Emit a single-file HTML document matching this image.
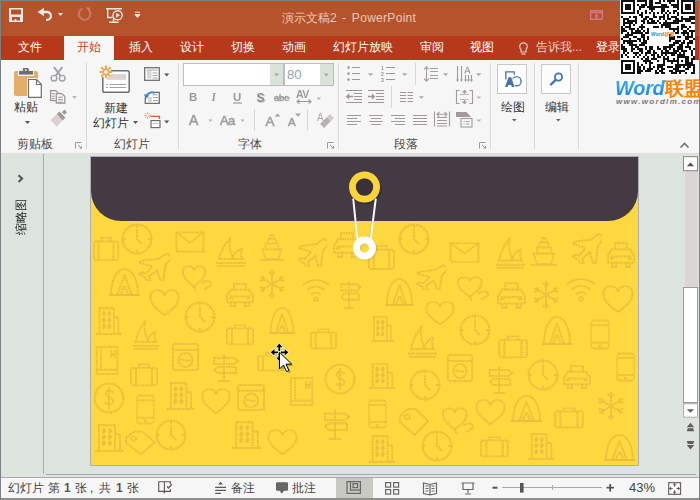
<!DOCTYPE html>
<html><head><meta charset="utf-8">
<style>
*{margin:0;padding:0;box-sizing:border-box}
html,body{width:700px;height:500px;overflow:hidden;background:#f6f6f6;font-family:"Liberation Sans",sans-serif}
.a{position:absolute}
.t{position:absolute;white-space:nowrap;font-size:12px;line-height:16px}
.tab{position:absolute;top:39px;font-size:12px;line-height:16px;color:#fff;white-space:nowrap;font-weight:500}
.glabel{position:absolute;top:136px;font-size:12px;line-height:16px;color:#4a4a4a;white-space:nowrap;font-weight:500}
.sep{position:absolute;width:1px;background:#ddd6d6}
svg{position:absolute;left:0;top:0}
</style></head><body>
<!-- backgrounds -->
<div class="a" style="left:0;top:0;width:700px;height:36px;background:#b5532c"></div>
<div class="a" style="left:0;top:36px;width:700px;height:24px;background:#b7391b"></div>
<div class="a" style="left:64px;top:36px;width:50px;height:24px;background:#f6f6f6"></div>
<div class="a" style="left:0;top:60px;width:700px;height:94px;background:#f6f6f6"></div>
<div class="a" style="left:0;top:153px;width:700px;height:1px;background:#e6dcdc"></div>
<div class="a" style="left:0;top:154px;width:700px;height:323px;background:#dce4dd"></div>
<div class="a" style="left:0;top:477px;width:700px;height:23px;background:#f6f6f6;border-top:1px solid #a9a9b1;border-bottom:2px solid #8d8d8d"></div>
<!-- window borders -->
<div class="a" style="left:0;top:0;width:700px;height:1px;background:#7b8186"></div>
<div class="a" style="left:0;top:0;width:1px;height:500px;background:#7b8186"></div>
<div class="a" style="left:698.7px;top:0;width:1.3px;height:500px;background:#7d8184"></div>

<!-- title & tabs text -->
<div class="t" style="left:282px;top:10px;color:#f1c9b6">演示文稿2<span style="letter-spacing:0.3px;word-spacing:1.8px"> - PowerPoint</span></div>
<div class="tab" style="left:18px">文件</div>
<div class="tab" style="left:77px;color:#c9432a">开始</div>
<div class="tab" style="left:129px">插入</div>
<div class="tab" style="left:180px">设计</div>
<div class="tab" style="left:231px">切换</div>
<div class="tab" style="left:282px">动画</div>
<div class="tab" style="left:333px">幻灯片放映</div>
<div class="tab" style="left:420px">审阅</div>
<div class="tab" style="left:470px">视图</div>
<div class="tab" style="left:536px;color:#f0cfc2">告诉我...</div>
<div class="tab" style="left:596px">登录</div>

<!-- ribbon labels -->
<div class="glabel" style="left:17px">剪贴板</div>
<div class="glabel" style="left:114px">幻灯片</div>
<div class="glabel" style="left:238px">字体</div>
<div class="glabel" style="left:394px">段落</div>
<div class="t" style="left:14px;top:99px;color:#333;font-weight:500">粘贴</div>
<div class="t" style="left:104px;top:99.5px;color:#333;font-weight:500">新建</div>
<div class="t" style="left:93px;top:114.5px;color:#333;font-weight:500">幻灯片</div>
<div class="t" style="left:501px;top:98.5px;color:#333;font-weight:500">绘图</div>
<div class="t" style="left:545px;top:98.5px;color:#333;font-weight:500">编辑</div>
<div class="sep" style="left:86px;top:63px;height:86px"></div>
<div class="sep" style="left:178px;top:63px;height:86px"></div>
<div class="sep" style="left:338px;top:63px;height:86px"></div>
<div class="sep" style="left:490px;top:63px;height:86px"></div>
<div class="sep" style="left:534px;top:63px;height:86px"></div>
<div class="sep" style="left:578px;top:63px;height:86px"></div>
<div class="sep" style="left:254px;top:109px;height:22px"></div>
<div class="sep" style="left:307px;top:109px;height:22px"></div>
<div class="sep" style="left:415px;top:63px;height:22px"></div>
<div class="sep" style="left:391px;top:86px;height:22px"></div>

<!-- font boxes -->
<div class="a" style="left:183px;top:63px;width:101px;height:23px;background:#fff;border:1px solid #bdbdbd"></div>
<div class="a" style="left:270px;top:64px;width:13px;height:21px;background:#dae3da"></div>
<div class="a" style="left:284px;top:63px;width:50px;height:23px;background:#fff;border:1px solid #bdbdbd"></div>
<div class="a" style="left:320px;top:64px;width:13px;height:21px;background:#dae3da"></div>
<div class="t" style="left:287px;top:67px;color:#90a2ae;font-size:13px">80</div>

<!-- draw/edit boxes -->
<div class="a" style="left:497px;top:64px;width:30px;height:30px;background:#fdfdfd;border:1px solid #c8c8c8"></div>
<div class="a" style="left:541px;top:64px;width:30px;height:30px;background:#fdfdfd;border:1px solid #c8c8c8"></div>

<!-- QR -->
<div class="a" style="left:620px;top:0;width:75px;height:75px;background:#fff"></div>
<svg width="700" height="500" style="left:0;top:0">
<g transform="translate(621,0)" fill="#111"><path d="M0 0h14v2h-14zM16 0h10v2h-10zM28 0h4v2h-4zM38 0h2v2h-2zM42 0h2v2h-2zM46 0h8v2h-8zM56 0h2v2h-2zM60 0h14v2h-14zM0 2h2v2h-2zM12 2h2v2h-2zM24 2h2v2h-2zM28 2h4v2h-4zM34 2h6v2h-6zM48 2h2v2h-2zM56 2h2v2h-2zM60 2h2v2h-2zM72 2h2v2h-2zM0 4h2v2h-2zM4 4h6v2h-6zM12 4h2v2h-2zM16 4h2v2h-2zM20 4h6v2h-6zM28 4h4v2h-4zM40 4h6v2h-6zM50 4h8v2h-8zM60 4h2v2h-2zM64 4h6v2h-6zM72 4h2v2h-2zM0 6h2v2h-2zM4 6h6v2h-6zM12 6h2v2h-2zM18 6h6v2h-6zM26 6h22v2h-22zM52 6h6v2h-6zM60 6h2v2h-2zM64 6h6v2h-6zM72 6h2v2h-2zM0 8h2v2h-2zM4 8h6v2h-6zM12 8h2v2h-2zM18 8h2v2h-2zM28 8h6v2h-6zM40 8h4v2h-4zM56 8h2v2h-2zM60 8h2v2h-2zM64 8h6v2h-6zM72 8h2v2h-2zM0 10h2v2h-2zM12 10h2v2h-2zM16 10h2v2h-2zM24 10h2v2h-2zM30 10h2v2h-2zM40 10h4v2h-4zM46 10h2v2h-2zM52 10h4v2h-4zM60 10h2v2h-2zM72 10h2v2h-2zM0 12h14v2h-14zM16 12h2v2h-2zM20 12h2v2h-2zM24 12h2v2h-2zM28 12h2v2h-2zM32 12h2v2h-2zM36 12h2v2h-2zM40 12h2v2h-2zM44 12h2v2h-2zM48 12h2v2h-2zM52 12h2v2h-2zM56 12h2v2h-2zM60 12h14v2h-14zM18 14h4v2h-4zM32 14h2v2h-2zM42 14h2v2h-2zM46 14h2v2h-2zM56 14h2v2h-2zM0 16h2v2h-2zM8 16h2v2h-2zM12 16h4v2h-4zM20 16h2v2h-2zM24 16h4v2h-4zM32 16h4v2h-4zM38 16h6v2h-6zM46 16h2v2h-2zM50 16h6v2h-6zM60 16h2v2h-2zM68 16h6v2h-6zM2 18h6v2h-6zM14 18h2v2h-2zM22 18h4v2h-4zM28 18h4v2h-4zM38 18h2v2h-2zM42 18h2v2h-2zM46 18h4v2h-4zM54 18h4v2h-4zM60 18h14v2h-14zM2 20h2v2h-2zM6 20h10v2h-10zM20 20h4v2h-4zM26 20h2v2h-2zM30 20h4v2h-4zM36 20h2v2h-2zM44 20h2v2h-2zM52 20h10v2h-10zM64 20h6v2h-6zM2 22h10v2h-10zM14 22h2v2h-2zM22 22h2v2h-2zM26 22h10v2h-10zM38 22h2v2h-2zM42 22h16v2h-16zM70 22h4v2h-4zM2 24h2v2h-2zM8 24h2v2h-2zM12 24h2v2h-2zM20 24h2v2h-2zM40 24h10v2h-10zM60 24h4v2h-4zM0 26h2v2h-2zM4 26h6v2h-6zM18 26h6v2h-6zM32 26h6v2h-6zM40 26h2v2h-2zM44 26h6v2h-6zM56 26h2v2h-2zM60 26h6v2h-6zM68 26h2v2h-2zM0 28h4v2h-4zM8 28h6v2h-6zM16 28h2v2h-2zM20 28h2v2h-2zM26 28h2v2h-2zM46 28h12v2h-12zM60 28h2v2h-2zM66 28h2v2h-2zM0 30h6v2h-6zM10 30h2v2h-2zM14 30h6v2h-6zM22 30h2v2h-2zM26 30h2v2h-2zM52 30h2v2h-2zM56 30h2v2h-2zM62 30h4v2h-4zM68 30h6v2h-6zM0 32h2v2h-2zM6 32h2v2h-2zM10 32h12v2h-12zM24 32h4v2h-4zM46 32h2v2h-2zM54 32h4v2h-4zM60 32h8v2h-8zM70 32h2v2h-2zM4 34h8v2h-8zM20 34h4v2h-4zM46 34h4v2h-4zM62 34h2v2h-2zM66 34h2v2h-2zM70 34h2v2h-2zM2 36h6v2h-6zM12 36h4v2h-4zM20 36h4v2h-4zM26 36h2v2h-2zM48 36h6v2h-6zM56 36h4v2h-4zM64 36h8v2h-8zM0 38h2v2h-2zM8 38h2v2h-2zM16 38h4v2h-4zM22 38h2v2h-2zM26 38h2v2h-2zM46 38h8v2h-8zM64 38h4v2h-4zM72 38h2v2h-2zM2 40h14v2h-14zM18 40h2v2h-2zM22 40h4v2h-4zM46 40h4v2h-4zM54 40h6v2h-6zM62 40h2v2h-2zM68 40h4v2h-4zM2 42h2v2h-2zM6 42h6v2h-6zM20 42h6v2h-6zM52 42h6v2h-6zM60 42h4v2h-4zM66 42h6v2h-6zM0 44h2v2h-2zM8 44h8v2h-8zM18 44h6v2h-6zM46 44h8v2h-8zM58 44h4v2h-4zM66 44h2v2h-2zM0 46h4v2h-4zM10 46h2v2h-2zM14 46h4v2h-4zM24 46h2v2h-2zM28 46h4v2h-4zM36 46h2v2h-2zM42 46h10v2h-10zM56 46h6v2h-6zM64 46h6v2h-6zM0 48h6v2h-6zM10 48h4v2h-4zM16 48h6v2h-6zM24 48h2v2h-2zM28 48h4v2h-4zM36 48h4v2h-4zM42 48h4v2h-4zM48 48h2v2h-2zM52 48h2v2h-2zM56 48h6v2h-6zM68 48h2v2h-2zM72 48h2v2h-2zM2 50h4v2h-4zM10 50h2v2h-2zM18 50h4v2h-4zM26 50h4v2h-4zM32 50h2v2h-2zM40 50h2v2h-2zM44 50h4v2h-4zM52 50h6v2h-6zM60 50h6v2h-6zM70 50h2v2h-2zM2 52h2v2h-2zM6 52h2v2h-2zM12 52h6v2h-6zM20 52h2v2h-2zM24 52h6v2h-6zM32 52h4v2h-4zM40 52h16v2h-16zM58 52h2v2h-2zM62 52h2v2h-2zM70 52h2v2h-2zM0 54h2v2h-2zM4 54h2v2h-2zM14 54h2v2h-2zM18 54h2v2h-2zM24 54h2v2h-2zM30 54h4v2h-4zM36 54h2v2h-2zM40 54h2v2h-2zM44 54h2v2h-2zM50 54h4v2h-4zM56 54h8v2h-8zM70 54h2v2h-2zM0 56h2v2h-2zM6 56h2v2h-2zM12 56h2v2h-2zM16 56h2v2h-2zM22 56h2v2h-2zM26 56h2v2h-2zM32 56h2v2h-2zM36 56h4v2h-4zM42 56h2v2h-2zM46 56h2v2h-2zM56 56h12v2h-12zM72 56h2v2h-2zM20 58h2v2h-2zM24 58h4v2h-4zM30 58h6v2h-6zM42 58h6v2h-6zM52 58h2v2h-2zM56 58h2v2h-2zM64 58h4v2h-4zM70 58h4v2h-4zM0 60h14v2h-14zM22 60h8v2h-8zM36 60h2v2h-2zM42 60h2v2h-2zM46 60h12v2h-12zM60 60h2v2h-2zM64 60h4v2h-4zM70 60h2v2h-2zM0 62h2v2h-2zM12 62h2v2h-2zM16 62h2v2h-2zM24 62h2v2h-2zM28 62h4v2h-4zM42 62h2v2h-2zM50 62h2v2h-2zM56 62h2v2h-2zM64 62h8v2h-8zM0 64h2v2h-2zM4 64h6v2h-6zM12 64h2v2h-2zM16 64h2v2h-2zM20 64h2v2h-2zM28 64h2v2h-2zM36 64h8v2h-8zM54 64h20v2h-20zM0 66h2v2h-2zM4 66h6v2h-6zM12 66h2v2h-2zM16 66h4v2h-4zM22 66h2v2h-2zM28 66h2v2h-2zM32 66h2v2h-2zM36 66h6v2h-6zM46 66h6v2h-6zM54 66h6v2h-6zM62 66h2v2h-2zM66 66h4v2h-4zM72 66h2v2h-2zM0 68h2v2h-2zM4 68h6v2h-6zM12 68h2v2h-2zM16 68h4v2h-4zM22 68h2v2h-2zM26 68h6v2h-6zM36 68h2v2h-2zM40 68h4v2h-4zM52 68h6v2h-6zM64 68h4v2h-4zM72 68h2v2h-2zM0 70h2v2h-2zM12 70h2v2h-2zM16 70h6v2h-6zM24 70h6v2h-6zM34 70h2v2h-2zM38 70h4v2h-4zM48 70h4v2h-4zM54 70h10v2h-10zM72 70h2v2h-2zM0 72h14v2h-14zM16 72h4v2h-4zM34 72h4v2h-4zM40 72h4v2h-4zM50 72h6v2h-6zM58 72h2v2h-2zM64 72h2v2h-2zM70 72h4v2h-4z"/></g>
</svg>
<div class="a" style="left:649px;top:28px;width:20px;height:18px;background:#fff"></div>
<div class="t" style="left:651px;top:31px;font-size:5px;line-height:6px;color:#2a8ad8;font-weight:bold;font-style:italic">Word<span style="color:#f08a1c">联盟</span></div>
<div class="a" style="left:600px;top:75px;width:98px;height:30px;background:#f6f6f6"></div>
<div class="t" style="left:615px;top:77px;font-size:20px;line-height:22px;font-weight:bold;font-style:italic;letter-spacing:-0.3px"><span style="background:linear-gradient(#46b6f4,#1a80d8);-webkit-background-clip:text;background-clip:text;color:transparent">Word</span><span style="color:#f4860e;font-style:normal;font-size:19px;letter-spacing:0;position:relative;top:-0.5px;font-weight:bold">联盟</span></div>
<div class="t" style="left:616px;top:97px;font-size:8px;line-height:10px;font-style:italic;font-weight:bold;color:#7a7a7a;letter-spacing:1.3px">www.wordlm.com</div>

<!-- main area -->
<div class="a" style="left:43px;top:154px;width:1px;height:320px;background:#a9a9b5"></div>
<div class="a" style="left:46px;top:474px;width:650px;height:1px;background:#a9a9b5"></div>
<div class="a" style="left:90px;top:156px;width:549px;height:310px;background:#fdd83f;border:1px solid #adadbb;overflow:hidden">
</div>

<svg width="700" height="500" style="left:0;top:0"><defs>
<filter id="fz" x="-5%" y="-5%" width="110%" height="110%"><feGaussianBlur stdDeviation="0.35"/></filter>
<clipPath id="slideclip"><rect x="91" y="157" width="547" height="308"/></clipPath>
<symbol id="i-suitcase" viewBox="0 0 30 30" preserveAspectRatio="none"><rect x="2" y="8" width="26" height="20" rx="2"/><path d="M10 8V4h10v4M7 8v20M23 8v20"/></symbol>
<symbol id="i-clock" viewBox="0 0 30 30" preserveAspectRatio="none"><circle cx="15" cy="15" r="13.5"/><path d="M15 6v9l5 5M15 1.5v3M15 25.5v3M1.5 15h3M25.5 15h3"/></symbol>
<symbol id="i-envelope" viewBox="0 0 30 30" preserveAspectRatio="none"><rect x="1.5" y="3" width="27" height="24"/><path d="M1.5 3L15 16 28.5 3"/></symbol>
<symbol id="i-plane" viewBox="0 0 30 30" preserveAspectRatio="none"><path d="M28 2c-2 0-5 2-8 5L4 9 2 11l12 4-6 7-4-1-2 2 5 3 3 5 2-2-1-4 7-6 4 12 2-2 2-16c3-3 5-6 5-8z"/></symbol>
<symbol id="i-balloon" viewBox="0 0 30 30" preserveAspectRatio="none"><path d="M12 24C4 17 1 13 1 8a5.5 5.5 0 0 1 11-2 5.5 5.5 0 0 1 11 2c0 5-3 9-11 16zM12 24l2 5M20 20c3-2 5-3 6-2a3 3 0 0 1 3 3c0 2-3 4-7 6"/></symbol>
<symbol id="i-tent" viewBox="0 0 30 30" preserveAspectRatio="none"><path d="M2 28C2 12 8 2 15 2s13 10 13 26zM0 28h30M15 8l-7 20M15 8l7 20M11 28l4-9 4 9"/></symbol>
<symbol id="i-heart" viewBox="0 0 30 30" preserveAspectRatio="none"><path d="M15 28C5 20 1.5 15 1.5 9a6.8 6.8 0 0 1 13.5-2 6.8 6.8 0 0 1 13.5 2c0 6-3.5 11-13.5 19z"/></symbol>
<symbol id="i-hotel" viewBox="0 0 30 30" preserveAspectRatio="none"><path d="M5 28V3h16v25M21 12h5v16M1 28h28M9 7h2v3H9zM15 7h2v3h-2zM9 13h2v3H9zM15 13h2v3h-2zM9 19h2v3H9zM15 19h2v3h-2z"/></symbol>
<symbol id="i-opera" viewBox="0 0 30 30" preserveAspectRatio="none"><path d="M1 26h28M3 22h24M4 22C6 12 10 6 14 2c-1 8 0 14 4 20M16 22c2-6 5-9 9-10-1 4-1 7 1 10M2 29h26"/></symbol>
<symbol id="i-ship" viewBox="0 0 30 30" preserveAspectRatio="none"><path d="M3 18h24l-4 10H7zM7 18v-6h16v6M10 12V7h10v5M13 7V3h4v4M0 29h30"/></symbol>
<symbol id="i-car" viewBox="0 0 30 30" preserveAspectRatio="none"><path d="M2 22v-7l4-6h18l4 6v7zM6 22v4h4v-4M20 22v4h4v-4M5 16h20M9 9V3h12v6M4 18h4M22 18h4"/></symbol>
<symbol id="i-snow" viewBox="0 0 30 30" preserveAspectRatio="none"><path d="M15 1v28M3 8l24 14M3 22L27 8M12 3l3 3 3-3M12 27l3-3 3 3M3 12l4-1-1-4M27 18l-4 1 1 4M3 18l4 1-1 4M27 12l-4-1 1-4"/></symbol>
<symbol id="i-wifi" viewBox="0 0 30 30" preserveAspectRatio="none"><path d="M1 10a20 20 0 0 1 28 0M6 15a13 13 0 0 1 18 0M10 20a7 7 0 0 1 10 0"/><circle cx="15" cy="25" r="2"/></symbol>
<symbol id="i-sign" viewBox="0 0 30 30" preserveAspectRatio="none"><path d="M14 2v26M8 28h12M4 5h20l4 3-4 3H4zM26 14H8l-4 3 4 3h18z"/></symbol>
<symbol id="i-book" viewBox="0 0 30 30" preserveAspectRatio="none"><path d="M3 2h24v26H3zM3 24h24M8 2v22M20 5v6l2-2 2 2V5"/></symbol>
<symbol id="i-washing" viewBox="0 0 30 30" preserveAspectRatio="none"><rect x="2" y="2" width="26" height="26" rx="2"/><path d="M2 8h26"/><circle cx="15" cy="18" r="7"/><path d="M10 18c2-2 4 2 10 0"/></symbol>
<symbol id="i-dollar" viewBox="0 0 30 30" preserveAspectRatio="none"><circle cx="15" cy="15" r="13.5"/><path d="M19 10c-1-2-7-3-7 1s7 3 7 7-6 3-8 1M15 5v20"/></symbol>
<symbol id="i-phone" viewBox="0 0 30 30" preserveAspectRatio="none"><rect x="3" y="1.5" width="24" height="27" rx="3"/><path d="M3 6h24M3 23h24M13 26h4"/></symbol>
<symbol id="i-tag" viewBox="0 0 30 30" preserveAspectRatio="none"><path d="M2 9L9 2h8l12 12-13 14L2 15z"/><circle cx="9" cy="10" r="2.5"/></symbol>
</defs><g clip-path="url(#slideclip)" filter="url(#fz)" fill="none" stroke="#e8bd3a" stroke-width="2" stroke-dasharray="2 0.6" opacity="0.9"><use href="#i-suitcase" x="92" y="234" width="28" height="28"/><use href="#i-clock" x="121" y="223" width="32" height="32"/><use href="#i-envelope" x="175" y="230" width="30" height="24"/><use href="#i-plane" x="137" y="252" width="33" height="29"/><use href="#i-balloon" x="182" y="265" width="30" height="27"/><use href="#i-tent" x="109" y="267" width="31" height="30"/><use href="#i-heart" x="149" y="289" width="31" height="28"/><use href="#i-clock" x="184" y="301" width="32" height="32"/><use href="#i-hotel" x="95" y="305" width="27" height="31"/><use href="#i-opera" x="132" y="320" width="28" height="30"/><use href="#i-opera" x="215" y="237" width="32" height="30"/><use href="#i-ship" x="260" y="232" width="24" height="29"/><use href="#i-plane" x="297" y="237" width="30" height="30"/><use href="#i-car" x="332" y="230" width="30" height="31"/><use href="#i-snow" x="257" y="269" width="30" height="30"/><use href="#i-wifi" x="302" y="276" width="28" height="28"/><use href="#i-car" x="225" y="281" width="30" height="29"/><use href="#i-sign" x="338" y="279" width="24" height="31"/><use href="#i-tent" x="269" y="306" width="26" height="29"/><use href="#i-suitcase" x="225" y="322" width="30" height="24"/><use href="#i-suitcase" x="309" y="326" width="29" height="24"/><use href="#i-suitcase" x="367" y="242" width="29" height="29"/><use href="#i-clock" x="398" y="223" width="32" height="32"/><use href="#i-envelope" x="449" y="241" width="31" height="23"/><use href="#i-plane" x="415" y="264" width="31" height="26"/><use href="#i-tent" x="385" y="277" width="29" height="30"/><use href="#i-balloon" x="457" y="276" width="32" height="26"/><use href="#i-heart" x="425" y="301" width="30" height="25"/><use href="#i-clock" x="459" y="314" width="32" height="32"/><use href="#i-hotel" x="370" y="314" width="24" height="29"/><use href="#i-opera" x="495" y="237" width="31" height="32"/><use href="#i-ship" x="531" y="235" width="26" height="31"/><use href="#i-plane" x="571" y="232" width="31" height="32"/><use href="#i-car" x="606" y="240" width="30" height="31"/><use href="#i-car" x="496" y="280" width="31" height="32"/><use href="#i-snow" x="531" y="280" width="30" height="30"/><use href="#i-wifi" x="566" y="275" width="30" height="29"/><use href="#i-heart" x="602" y="285" width="32" height="29"/><use href="#i-tent" x="542" y="315" width="30" height="31"/><use href="#i-phone" x="589" y="319" width="22" height="31"/><use href="#i-book" x="94" y="345" width="26" height="31"/><use href="#i-suitcase" x="129" y="361" width="30" height="26"/><use href="#i-washing" x="171" y="342" width="29" height="30"/><use href="#i-sign" x="210" y="353" width="30" height="30"/><use href="#i-dollar" x="93" y="382" width="32" height="32"/><use href="#i-phone" x="135" y="394" width="21" height="31"/><use href="#i-hotel" x="166" y="380" width="29" height="31"/><use href="#i-heart" x="201" y="388" width="30" height="27"/><use href="#i-hotel" x="94" y="422" width="30" height="31"/><use href="#i-tag" x="124" y="430" width="32" height="26"/><use href="#i-clock" x="155" y="419" width="32" height="32"/><use href="#i-suitcase" x="256" y="350" width="30" height="22"/><use href="#i-dollar" x="324" y="363" width="32" height="32"/><use href="#i-washing" x="236" y="383" width="30" height="29"/><use href="#i-book" x="288" y="376" width="27" height="31"/><use href="#i-sign" x="321" y="408" width="30" height="33"/><use href="#i-hotel" x="231" y="419" width="31" height="31"/><use href="#i-heart" x="267" y="429" width="31" height="27"/><use href="#i-opera" x="407" y="325" width="31" height="33"/><use href="#i-hotel" x="368" y="361" width="28" height="29"/><use href="#i-washing" x="446" y="353" width="28" height="30"/><use href="#i-clock" x="409" y="369" width="32" height="32"/><use href="#i-sign" x="486" y="365" width="28" height="30"/><use href="#i-phone" x="367" y="399" width="21" height="30"/><use href="#i-tag" x="398" y="407" width="31" height="30"/><use href="#i-balloon" x="442" y="407" width="32" height="28"/><use href="#i-heart" x="475" y="399" width="31" height="27"/><use href="#i-hotel" x="368" y="433" width="28" height="31"/><use href="#i-clock" x="421" y="430" width="32" height="32"/><use href="#i-suitcase" x="479" y="434" width="31" height="24"/><use href="#i-suitcase" x="497" y="333" width="32" height="26"/><use href="#i-phone" x="615" y="352" width="21" height="30"/><use href="#i-clock" x="527" y="359" width="32" height="32"/><use href="#i-car" x="562" y="363" width="30" height="29"/><use href="#i-tent" x="511" y="394" width="31" height="29"/><use href="#i-suitcase" x="553" y="405" width="32" height="24"/><use href="#i-snow" x="596" y="391" width="30" height="30"/><use href="#i-hotel" x="527" y="431" width="28" height="30"/><use href="#i-tent" x="604" y="433" width="31" height="29"/></g>
<path d="M91 157v34a30 30 0 0 0 30 30h487a30 30 0 0 0 30-30v-34z" fill="#443a43"/>
<!-- clasp -->
<circle cx="366.5" cy="189" r="15.5" fill="#2f282e" opacity="0.5"/>
<path d="M353.5 199l4 42M376 199l-6 42" stroke="#3a3238" stroke-width="1.8" opacity="0.4"/>
<path d="M353.2 198.5l4.3 42M375.8 198.5l-5.3 42" stroke="#fbfbfb" stroke-width="2"/>
<circle cx="364.5" cy="187" r="12.1" fill="none" stroke="#fdd43c" stroke-width="6.8"/>
<circle cx="365.7" cy="249.3" r="8" fill="none" stroke="#c9a93a" stroke-width="7.5" opacity="0.35"/>
<circle cx="364.5" cy="248" r="8" fill="none" stroke="#ffffff" stroke-width="7"/>
<!-- cursor -->
<g fill="#000" stroke="#fff" stroke-width="1.3" stroke-linejoin="round" paint-order="stroke">
<path d="M279.3 343.6l3.2 3.6h-2.3v3.8h-1.8v-3.8h-2.3z"/>
<path d="M270.8 352.3l3.6-3.2v2.3h3.8v1.8h-3.8v2.3z"/>
<path d="M288.3 352.3l-3.6-3.2v2.3h-3.8v1.8h3.8v2.3z"/>
<path d="M279.3 361l-3.2-3.6h2.3v-3.8h1.8v3.8h2.3z"/>
</g>
<path d="M280 353.5l0 16 4-4 3 6.5 2.6-1.2-3-6.3h5.6z" fill="#000" opacity="0.22" transform="translate(1.5,1.5)"/>
<path d="M279.5 352.3v16.7l4-4 3 6.6 2.4-1.1-3-6.4h5.8z" fill="#fff" stroke="#000" stroke-width="1" stroke-linejoin="miter"/>
</svg>
<!-- status -->
<div class="t" style="left:8px;top:480px;color:#444;font-weight:500">幻灯片</div>
<div class="t" style="left:47.5px;top:480px;color:#444;font-weight:500">第</div>
<div class="t" style="left:64px;top:480px;color:#555;font-weight:bold">1</div>
<div class="t" style="left:74.5px;top:480px;color:#444;font-weight:500">张</div>
<div class="t" style="left:90px;top:480px;color:#444;font-weight:500">,</div>
<div class="t" style="left:98.5px;top:480px;color:#444;font-weight:500">共</div>
<div class="t" style="left:116px;top:480px;color:#555;font-weight:bold">1</div>
<div class="t" style="left:126.5px;top:480px;color:#444;font-weight:500">张</div>
<div class="t" style="left:231px;top:480px;color:#444;font-weight:500">备注</div>
<div class="t" style="left:292px;top:480px;color:#444;font-weight:500">批注</div>
<div class="a" style="left:336px;top:478px;width:37px;height:20px;background:#c9c9c3"></div>
<div class="t" style="left:629px;top:480px;color:#444;font-size:13px">43%</div>

<svg width="700" height="500">
<!-- title bar icons -->
<path fill-rule="evenodd" fill="#f2e8e2" d="M9 8h14v14H9z M11 9.6h10v4.9H11z M12 17.1h8v3.4h-3.6v-1.6h-1.8v1.6H12z"/>
<path d="M37.5 12l6.5-4.2v8.4z" fill="#f2e8e2"/>
<path d="M43 12h4a3.9 3.9 0 0 1 0 7.8h-1" fill="none" stroke="#f2e8e2" stroke-width="2.3"/>
<path d="M58 13h5l-2.5 3z" fill="#f2e8e2"/>
<path d="M89 10.2a5.8 5.8 0 1 1 -6.5 -1.6" fill="none" stroke="#cc7865" stroke-width="2"/>
<path d="M85.5 7.2l5 0.3-1.2 4.6z" fill="#cc7865"/>
<g fill="none" stroke="#f2e8e2" stroke-width="1.4">
  <path d="M106 8.7h16M107.7 9v8.5h5"/>
  <circle cx="117.6" cy="15.3" r="4.6"/>
  <path d="M109 22.2h9.5M113.5 18v4"/>
</g>
<path d="M116.2 12.8v5l3.8-2.5z" fill="#f2e8e2"/>
<path d="M135 12.2h5M135 14.5h5l-2.5 3z" fill="#f2e8e2" stroke="#f2e8e2" stroke-width="1"/>
<g fill="none" stroke="#d8778a" stroke-width="1.4">
  <rect x="590.7" y="10.7" width="11.6" height="8.6"/>
  <path d="M591 12.5h11M596.5 19v-5"/>
</g>
<path d="M594 16.5l2.5-2.5 2.5 2.5z" fill="#d8778a"/>
<!-- lightbulb -->
<g fill="none" stroke="#f0cfc2" stroke-width="1.2">
  <path d="M521 49.5a3.8 3.8 0 1 1 5 0v2.5h-5z"/>
  <path d="M521.5 54h4"/>
</g>

<!-- clipboard -->
<rect x="14" y="71" width="24" height="25" rx="2" fill="#e3ad6a"/>
<rect x="18" y="70" width="16" height="6" fill="#f6f6f6"/>
<rect x="19" y="71" width="14" height="3.6" fill="#6f6f6f"/>
<rect x="22.8" y="68" width="6" height="4" rx="1" fill="#6f6f6f"/>
<rect x="25" y="69.3" width="1.6" height="1.5" fill="#f6f6f6"/>
<path d="M27 78h10l5.5 5.5V98H27z" fill="#f6f6f6"/>
<path d="M28.5 79.5h8l4.8 4.8v13h-12.8z" fill="#fff" stroke="#6f6f6f" stroke-width="1.2"/>
<path d="M36.5 79.5v5h4.8" fill="none" stroke="#6f6f6f" stroke-width="1.2"/>
<path d="M25 121h5l-2.5 3z" fill="#555"/>
<!-- scissors -->
<g fill="none" stroke="#a3a0aa" stroke-width="1.4">
  <circle cx="54" cy="78.2" r="2.8"/><circle cx="62.2" cy="78.2" r="2.8"/>
  <path d="M54 67.2L60.6 75.8M62.2 67.2L55.6 75.8" stroke-width="1.9"/>
</g>
<!-- copy -->
<g fill="#f6f6f6" stroke="#9b9292" stroke-width="1.2">
  <path d="M50.6 90.6h5.2l2.3 2.3v7.7h-7.5z"/>
  <path d="M56.3 93.6h5.5l3 3v6.6h-8.5z"/>
</g>
<path d="M51.8 93.7h3M51.8 96.2h3M51.8 98.7h3M58 97.2h5M58 99.7h5M58 102.2h5" stroke="#9b9292" stroke-width="1"/>
<path d="M72 96h5l-2.5 3z" fill="#b8b8b8"/>
<!-- format painter -->
<path d="M50.5 120.2l5.8-5.6 6 6-5.6 5.8z" fill="#d9d0d0"/>
<path d="M56.6 114.3l2.8-2.7 6 6-2.7 2.8z" fill="#a29a9a"/>
<path d="M61.8 112.2l2.6-2.6 2.6 2.6-2.6 2.6z" fill="#a29a9a"/>

<!-- new slide -->
<rect x="102.8" y="70.8" width="26.4" height="21.4" rx="1.8" fill="#fff" stroke="#707070" stroke-width="1.5"/>
<rect x="107" y="74" width="19" height="5.8" fill="#dcd3d3"/>
<path d="M106 84.5h2M109.5 84.5h16.5M106 87.5h2M109.5 87.5h16.5" stroke="#a3a3b3" stroke-width="1.2"/>
<rect x="98" y="64" width="13" height="13" fill="#f6f6f6"/>
<g stroke="#e9a852" stroke-width="2" fill="none">
  <path d="M105.9 65.6v3.3M105.9 75v3.3M99.5 71.9h3.3M109 71.9h3.3M101.3 67.3l2.2 2.2M108.3 74.3l2.2 2.2M110.5 67.3l-2.2 2.2M103.5 74.3l-2.2 2.2"/>
  <circle cx="105.9" cy="71.9" r="2.6" stroke-width="1.5"/>
</g>
<path d="M133 121h5l-2.5 3z" fill="#555"/>
<!-- layout -->
<rect x="144.7" y="67.7" width="14.6" height="12.6" fill="#fff" stroke="#707070" stroke-width="1.3"/>
<rect x="147" y="70.5" width="4.5" height="8" fill="#dcd3d3"/>
<path d="M146.5 70h11M152.5 73h5M152.5 75.5h5M152.5 78h5" stroke="#a3a3b3" stroke-width="1"/>
<path d="M164.2 73.5h5l-2.5 3z" fill="#555"/>
<!-- reset -->
<path d="M150 92.3h9.3v11h-14v-6" fill="#fff" stroke="#6e6e6e" stroke-width="1.3"/>
<rect x="148" y="97" width="3.8" height="5.3" fill="#dcd3d3"/>
<path d="M152.5 94.8h5M153 97.5h5M153 100.5h5" stroke="#a3a3b3" stroke-width="1"/>
<path d="M155 93a6 4.5 0 0 0 -8.5 2.5" fill="none" stroke="#4a7fc0" stroke-width="1.8"/>
<path d="M144 94.2l5.3 1.2-3.6 3.5z" fill="#4a7fc0"/>
<!-- section -->
<g stroke="#eaa552" stroke-width="0.9" fill="none">
  <path d="M147.5 112.2v2M147.5 117v2M144.2 115.5h2M149 115.5h2M145.2 113.2l1.3 1.3M149.8 117.8l-1.3-1.3M149.8 113.2l-1.3 1.3M145.2 117.8l1.3-1.3"/>
</g>
<path d="M150.5 116.3h9v2.6M150.5 116.3v0" fill="none" stroke="#df5c1c" stroke-width="1.3"/>
<rect x="151" y="120.6" width="9" height="7" fill="#fff" stroke="#6e6e6e" stroke-width="1.2"/>
<path d="M152.5 123.6h6" stroke="#c4bebe" stroke-width="1"/>
<path d="M164.2 120.5h5l-2.5 3z" fill="#555"/>

<!-- font group -->
<path d="M274 73.5h5.2l-2.6 3z" fill="#a8a8a8"/>
<path d="M323.7 73.5h5.2l-2.6 3z" fill="#a8a8a8"/>
<g font-family="Liberation Sans" font-weight="bold" fill="#9a9a9a">
  <text x="189" y="101" font-size="11.5">B</text>
  <text x="211.5" y="101" font-size="11.5" font-family="Liberation Serif" font-style="italic">I</text>
  <text x="233" y="101" font-size="11.5">U</text>
  <text x="257.8" y="103" font-size="12" fill="#c8d0c8">S</text><text x="256.5" y="102" font-size="12" fill="#8a8a8a">S</text>
  <text x="274" y="101" font-size="9.5" letter-spacing="-0.2" font-weight="normal" stroke="#9a9a9a" stroke-width="0.4">abc</text>
  <text x="296" y="98" font-size="10.5" letter-spacing="-0.5">AV</text>
</g>
<path d="M233 103h9" stroke="#9a9a9a" stroke-width="1.2"/>
<path d="M274 98h16" stroke="#9a9a9a" stroke-width="1"/>
<path d="M297 101.5h14M299.5 99.5l-2.5 2 2.5 2M308.5 99.5l2.5 2-2.5 2" fill="none" stroke="#9a9a9a" stroke-width="1.1"/>
<path d="M316.5 97.5h4.5l-2.25 2.5z" fill="#b0b0b0"/>
<g font-family="Liberation Sans" fill="#a0a0a0" stroke="#a0a0a0" stroke-width="0.6">
  <text x="189" y="124.8" font-size="14">A</text>
  <text x="220" y="124.8" font-size="13" letter-spacing="-0.6">Aa</text>
  <text x="265.5" y="126" font-size="13.5">A</text>
  <text x="288" y="126" font-size="11.5">A</text>
</g>
<path d="M208.4 119.5h4l-2 2.5zM240.4 119.5h4.4l-2.2 2.5z" fill="#b5b5b5"/>
<path d="M274.5 116.5l3-3 3 3zM295 113.5h6l-3 3z" fill="#a0a0a0"/>
<text x="317" y="121" font-family="Liberation Sans" font-size="10" fill="#a8a8a8">A</text>
<path d="M320 124l7-7 4 4-7 7z" fill="#b9b1b1"/>
<path d="M327 117l3-3 4 4-3 3z" fill="#d3cccc"/>
<!-- launchers -->
<g fill="none" stroke="#9a9a9a" stroke-width="1">
  <path d="M75.5 148.5v-6h6M78 145l3.5 3.5"/>
  <path d="M327.5 148.5v-6h6M330 145l3.5 3.5"/>
  <path d="M479.5 148.5v-6h6M482 145l3.5 3.5"/>
</g>
<path d="M79 148.5h3v-3z M331 148.5h3v-3z M483 148.5h3v-3z" fill="#9a9a9a"/>

<!-- paragraph -->
<g stroke="#9f9797" stroke-width="1.1" fill="none">
  <path d="M352 67.5h8M352 73.5h8M352 79.5h8"/>
  <path d="M386 67.5h9M386 73.5h9M386 79.5h9"/>
</g>
<g fill="#a39b9b">
  <circle cx="348.5" cy="67.6" r="1.3"/><circle cx="348.5" cy="73.6" r="1.3"/><circle cx="348.5" cy="79.6" r="1.3"/>
  <text x="380.8" y="69.8" font-size="5.8" font-weight="bold" font-family="Liberation Sans">1</text>
  <text x="380.8" y="75.8" font-size="5.8" font-weight="bold" font-family="Liberation Sans">2</text>
  <text x="380.8" y="81.8" font-size="5.8" font-weight="bold" font-family="Liberation Sans">3</text>
</g>
<path d="M367.8 73.2h5.4l-2.7 2.8zM402 73.2h5.4l-2.7 2.8zM443 73.2h5.2l-2.6 2.8zM476 73.2h5.4l-2.7 2.8z" fill="#aaa"/>
<!-- line spacing -->
<g stroke="#a39b9b" stroke-width="1.1" fill="none">
  <path d="M426.5 67v14M424 69.3l2.5-2.6 2.5 2.6M424 78.7l2.5 2.6 2.5-2.6"/>
  <path d="M430 68.5h8M430 71.5h8M430 75.5h8M430 78.5h8"/>
</g>
<!-- text direction -->
<g stroke="#a39b9b" stroke-width="1.1" fill="none">
  <path d="M457.5 66v15M461.5 66v15M465.5 75v6M468.5 75v6M471.5 75v6"/>
</g>
<path d="M464.2 73.5l2.6-6.8h1.2l2.6 6.8h-1.2l-0.6-1.7h-2.8l-0.6 1.7zM466.1 70.8h2.2l-1.1-3z" fill="#a39b9b" fill-rule="evenodd"/>
<path d="M456 79.5l1.5 2.6 1.5-2.6zM460 79.5l1.5 2.6 1.5-2.6zM464 79.5l1.5 2.6 1.5-2.6zM467 79.5l1.5 2.6 1.5-2.6zM470 79.5l1.5 2.6 1.5-2.6z" fill="#a39b9b"/>
<!-- indent -->
<g stroke="#9f9797" stroke-width="1.1" fill="none">
  <path d="M346 90.5h16M354 93.5h8M354 96.5h8M354 99.5h8M346 102.5h16"/>
  <path d="M368 90.5h16M376 93.5h8M376 96.5h8M376 99.5h8M368 102.5h16"/>
  <path d="M348.5 96.5h4.5M368 96.5h4.5" stroke-width="1.6"/>
</g>
<path d="M345.8 96.5l3.4-3.2v6.4zM375.3 96.5l-3.4-3.2v6.4z" fill="#9f9797"/>
<!-- columns -->
<g stroke="#9f9797" stroke-width="1.1" fill="none">
  <path d="M400 92.5h6M400 95.5h6M400 98.5h6M400 101.5h6M407.5 92.5h5.5M407.5 95.5h5.5M407.5 98.5h5.5M407.5 101.5h5.5"/>
</g>
<path d="M418.8 96.3h5.2l-2.6 2.8z" fill="#aaa"/>
<!-- align text -->
<g stroke="#a39b9b" stroke-width="1.1" fill="none">
  <path d="M459.5 90.5h-3v13h3M469.5 90.5h3v13h-3"/>
  <path d="M460 94.5h9M460 99.5h9" stroke-dasharray="1.5 0.8"/>
  <path d="M464.5 90.5v3.5M462.5 92.5l2-2 2 2M464.5 100v3.5M462.5 101.5l2 2 2-2"/>
</g>
<path d="M476.3 96.5h5l-2.5 2.5z" fill="#b8b8b8"/>
<!-- align -->
<g stroke="#a39a9a" stroke-width="1.1" fill="none">
  <path d="M347 115.5h14M347 118.5h10M347 121.5h14M347 124.5h10"/>
  <path d="M369 115.5h14M371 118.5h10M369 121.5h14M371 124.5h10"/>
  <path d="M391 115.5h14M395 118.5h10M391 121.5h14M395 124.5h10"/>
  <path d="M413 115.5h14M413 118.5h14M413 121.5h14M413 124.5h14"/>
</g>
<!-- distributed -->
<g stroke="#a39b9b" stroke-width="1.1" fill="none">
  <path d="M434.5 111.5v15M449.5 111.5v15"/>
  <path d="M437 117.5h10M437 120.5h10M437 123.5h10M437 126h10"/>
  <path d="M437 114.3h10M439.3 112l-2.3 2.3 2.3 2.3M444.7 112l2.3 2.3-2.3 2.3"/>
</g>
<!-- smartart -->
<path d="M456 112h10.5l4.5 5h-15z" fill="#a39b9b"/>
<rect x="461" y="118.5" width="11" height="8.5" fill="#f6f6f6" stroke="#a39b9b" stroke-width="1.1"/>
<path d="M463.5 121.5h1.2M466 121.5h3.5M463.5 124h1.2M466 124h3.5" stroke="#a39b9b" stroke-width="0.9"/>
<path d="M476.3 119.5h5l-2.5 2.5z" fill="#b8b8b8"/>

<!-- drawing icon -->
<path d="M505.8 79.6v-7.8h8.4v3" fill="none" stroke="#4a72a8" stroke-width="1.3"/>
<circle cx="516.5" cy="81.2" r="4.6" fill="none" stroke="#4a78b0" stroke-width="1.4"/>
<path d="M505 87l3.4-9.7h2.8l3.4 9.7h-2.7l-0.7-2.1h-2.9l-0.7 2.1z" fill="#fdfdfd" stroke="#fdfdfd" stroke-width="1.6"/>
<path fill-rule="evenodd" d="M505 87l3.4-9.7h2.8l3.4 9.7h-2.7l-0.7-2.1h-2.9l-0.7 2.1z M808 0z M808.3 83h2.7l-1.35-4z" fill="#4a72a8"/>
<path d="M512 119h4.6l-2.3 2.6zM556 119h4.6l-2.3 2.6z" fill="#666"/>
<!-- editing icon -->
<circle cx="558.5" cy="77" r="3.6" fill="none" stroke="#3f75b3" stroke-width="1.8"/>
<path d="M555.5 80l-4.5 4.5" stroke="#3f75b3" stroke-width="2.4" stroke-linecap="round"/>
<!-- collapse -->
<path d="M680.5 147.5l4-4 4 4" fill="none" stroke="#707070" stroke-width="1.6"/>

<!-- thumbnails pane -->
<path d="M18.5 175.3l3.6 3.3-3.6 3.3" fill="none" stroke="#555" stroke-width="2"/>

<!-- scrollbar -->
<rect x="685" y="170" width="13" height="118" fill="#dcd5d6"/>
<rect x="683.5" y="156.7" width="14" height="14" fill="#fcfcfc" stroke="#8e8585" stroke-width="1"/>
<path d="M686.8 166.2l3.7-3.7 3.7 3.7z" fill="#5a5050"/>
<rect x="683.5" y="287.5" width="14" height="115" fill="#fff" stroke="#a39b9b" stroke-width="1"/>
<rect x="683.5" y="403.7" width="14" height="13.5" fill="#fcfcfc" stroke="#b3abab" stroke-width="1"/>
<path d="M686.8 409.2h7.2l-3.6 3.6z" fill="#5c5a7e"/>
<path d="M686.8 427.2l3.7-4.4 3.7 4.4zM687.8 428.2h5.4l1 3h-7.4zM686.8 441h7.4l-1 3h-5.4zM686.8 445l3.7 4.4 3.7-4.4z" fill="#655b5b"/>

<!-- status icons -->
<g fill="none" stroke="#5f5656" stroke-width="1.1">
  <path d="M164.4 481.7h-5.7v9.7h5.7M164.4 481.7v11M164.4 481.7h6v2.3M170.4 489v2.4h-6"/>
  <path d="M167 486.4l1.4 1.6 3.4-3.8" stroke-width="1.3"/>
  <path d="M215.2 487.4h10.8M215.2 490.4h10.8M215.2 493.4h5.8"/>
</g>
<path d="M163.2 492.2h2.4l-1.2 1.5zM218 484.6l2.5-2.8 2.5 2.8z" fill="#5f5656"/>
<path d="M277 482.3h10a1 1 0 0 1 1 1v6.4a1 1 0 0 1 -1 1h-3l-2.2 3-2.2-3h-2.6a1 1 0 0 1 -1-1v-6.4a1 1 0 0 1 1-1z" fill="#666"/>
<g fill="none" stroke="#666" stroke-width="1.2">
  <rect x="347" y="481.6" width="13.4" height="11.8"/>
  <path d="M350.5 481.6v8.6h9.9M353 483.6h4.6v4h-4.6z"/>
  <rect x="385.6" y="482.6" width="5" height="4.5"/><rect x="393.6" y="482.6" width="5" height="4.5"/>
  <rect x="385.6" y="489.6" width="5" height="4.5"/><rect x="393.6" y="489.6" width="5" height="4.5"/>
  <path d="M423.5 483v10.5l6.5 1.5 6.5-1.5V483l-6.5 1.5z M430 484.5v10M425.5 486h3M425.5 488.5h3M425.5 491h3M431.5 486h3M431.5 488.5h3M431.5 491h3"/>
  <path d="M461.5 483h13M463 483v6.5h10V483M468 489.5v3.5M465 494h6"/>
</g>
<path d="M492.5 487.7h5" stroke="#555" stroke-width="2"/>
<path d="M502 487.5h100" stroke="#aaa" stroke-width="1"/>
<path d="M552.5 485v5" stroke="#aaa" stroke-width="1"/>
<rect x="520" y="483" width="3.6" height="9.6" fill="#555"/>
<path d="M606.5 487.7h7.5M610.2 484v7.5" stroke="#555" stroke-width="1.8"/>
<rect x="668.7" y="482.7" width="11.8" height="11.6" fill="#fff" stroke="#6a6262" stroke-width="1.2"/>
<path d="M674.6 482.7v4M673 484.8h3.2M674.6 494.3v-4M673 492.2h3.2M668.7 488.5h4M670.7 486.9v3.2M680.5 488.5h-4M678.5 486.9v3.2" stroke="#6a6262" stroke-width="1.1"/>
</svg>

<div class="t" style="left:12.5px;top:198.5px;width:16px;height:36px;"><div style="position:absolute;left:-10px;top:10px;width:36px;height:16px;transform:rotate(-90deg);font-size:12px;line-height:16px;color:#222;text-align:center;font-weight:500">缩略图</div></div>
</body></html>
